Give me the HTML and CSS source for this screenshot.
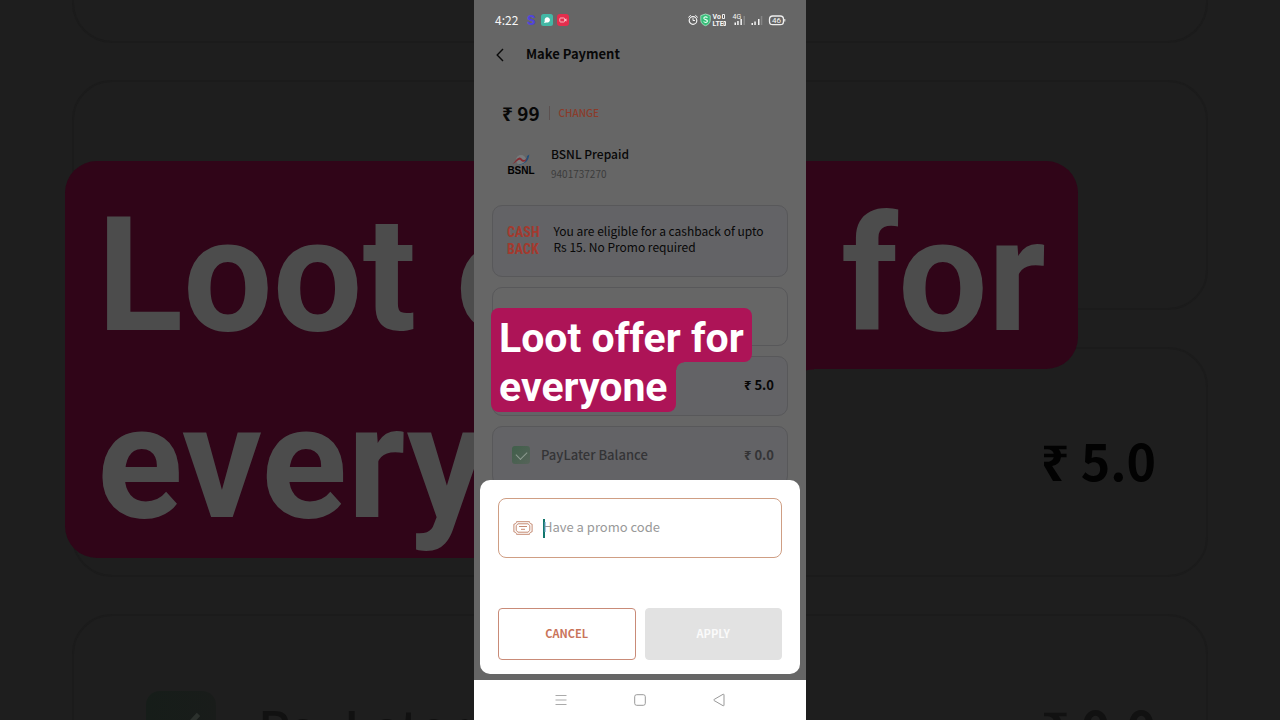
FILE: index.html
```html
<!DOCTYPE html>
<html lang="en">
<head>
<meta charset="utf-8">
<meta name="viewport" content="width=device-width, initial-scale=1">
<title>Make Payment</title>
<link rel="stylesheet" href="styles.css">
</head>
<body>
<div class="stage">
  <div class="backdrop" aria-hidden="true">
    <div class="backdrop-card backdrop-card-first"></div>
    <div class="backdrop-card"></div>
    <div class="backdrop-card"><span class="backdrop-price">₹ 5.0</span></div>
    <div class="backdrop-card backdrop-muted">
      <span class="backdrop-check"><svg viewBox="0 0 18 18"><path d="M4.500 9.500l3 3 6-6.500" fill="none" stroke="#2c312d" stroke-width="1.200"/></svg></span>
      <span class="backdrop-label">PayLater Balance</span>
      <span class="backdrop-price">₹ 0.0</span>
    </div>
    <p class="banner banner-large"><span class="banner-line">Loot offer for</span><span class="banner-line">everyone</span></p>
  </div>

  <div class="phone">
    <div class="app">
      <div class="status">
        <span class="clock">4:22</span>
        <span class="notices">
          <span class="notice-s">S</span>
          <svg width="12" height="12" viewBox="0 0 12 12"><rect width="12" height="12" rx="2.500" fill="#43b8a5"/><path d="M3 9l.8-2A2.700 2.700 0 1 1 5.500 8.500z" fill="#fff"/></svg>
          <svg width="12" height="12" viewBox="0 0 12 12"><rect width="12" height="12" rx="3" fill="#e42e4d"/><rect x="2.800" y="4" width="4.800" height="4" rx=".8" fill="none" stroke="#ffc4cd" stroke-width=".9"/><path d="M8 5.200l1.500-.8v3.200L8 6.800" fill="#ffc4cd"/></svg>
        </span>
        <svg class="signals" width="98" height="14" viewBox="0 0 98 14" role="img" aria-label="Alarm, security, VoLTE, signal, battery 46 percent">
          <g fill="none" stroke="#f4f4f4" stroke-linecap="round">
            <circle cx="5" cy="7.500" r="3.800" stroke-width="1.200"/>
            <path d="M5 5.500v2h1.600M.6 4.200l1.900-1.700M9.500 4.200L7.600 2.500" stroke-width="1"/>
          </g>
          <path d="M17.500 1l4.700 1.600v4.800c0 2.500-2 4.300-4.700 5.300-2.700-1-4.700-2.800-4.700-5.300V2.600z" fill="#35bd78" stroke="#aee8c9" stroke-width=".8"/>
          <path d="M19.500 4.600c-1-1.200-3.700-1-3.700.7s3.700 1 3.700 2.700-2.800 1.900-3.900.5" fill="none" stroke="#e8fff2" stroke-width="1.100"/>
          <text class="signal-volte" x="24.500" y="6">Vo</text>
          <text class="signal-volte" x="24.500" y="13">LTE</text>
          <path d="M34.500 1.500h2v4h-2zM36 8.500h1.500v4H36z" fill="#555" stroke="#fff" stroke-width=".9"/>
          <text class="signal-type" x="44.500" y="6">4G</text>
          <g fill="#f5f5f5"><rect x="46.500" y="9.500" width="1.500" height="2.500"/><rect x="49.200" y="8" width="1.500" height="4"/><rect x="52.400" y="6" width="1.500" height="6"/></g>
          <rect x="55.500" y="3" width="1.500" height="9" fill="#858585"/>
          <g fill="#f5f5f5"><rect x="63.500" y="10" width="1.500" height="2"/><rect x="66.300" y="8.500" width="1.500" height="3.500"/><rect x="70" y="6" width="1.500" height="6"/></g>
          <rect x="72.800" y="3" width="1.500" height="9" fill="#858585"/>
          <rect x="81.500" y="3" width="14" height="8.600" rx="3.200" fill="none" stroke="#eee" stroke-width="1.300"/>
          <path d="M96.800 6v2.500" stroke="#eee"/>
          <text class="signal-battery" x="88.500" y="10" text-anchor="middle">46</text>
        </svg>
      </div>

      <header class="topbar">
        <button class="back" type="button" aria-label="Back"><svg width="8" height="14" viewBox="0 0 8 14"><path d="M7 1L1.200 7 7 13" fill="none" stroke="#0b0b0b" stroke-width="1.400"/></svg></button>
        <h1 class="title">Make Payment</h1>
      </header>

      <main class="content">
        <div class="amount">
          <strong class="amount-value">₹ 99</strong>
          <a class="change" href="#">CHANGE</a>
        </div>
        <div class="operator">
          <svg class="operator-logo" width="28" height="24" viewBox="0 0 28 24" role="img" aria-label="BSNL">
            <circle cx="14" cy="8" r="5" fill="#777a7c"/>
            <path d="M5 12c2.500-1 4.500-6 7.500-6.500 2-.3 2.500 2.500 4.500 2.500 1.500 0 2.500-1.500 3.500-3-.5 3-2 4.800-4 4.800-2.500 0-2.500-2-4-2-2 0-3.500 3.500-7.500 4.200z" fill="#852c32"/>
            <path d="M11 12.500c3 .5 6-.5 8-2.500 2-2 3-4.500 3.300-7.500l-2.300 1.500c0 3-1.500 6-4 7.200-1.500.8-3.500 1-5 1.300z" fill="#244f78"/>
            <text class="bsnl-name" x="14" y="22" text-anchor="middle">BSNL</text>
          </svg>
          <div class="operator-info">
            <h2 class="operator-name">BSNL Prepaid</h2>
            <p class="operator-number">9401737270</p>
          </div>
        </div>
        <div class="cards">
          <section class="card card-cashback">
            <span class="cashback-logo"><span>CASH</span><span>BACK</span></span>
            <p class="cashback-text">You are eligible for a cashback of upto Rs 15. No Promo required</p>
          </section>
          <section class="card card-plain"></section>
          <section class="card"><strong class="price">₹ 5.0</strong></section>
          <section class="card card-muted">
            <input class="check" type="checkbox" id="paylater" checked>
            <label class="check-label" for="paylater">PayLater Balance</label>
            <span class="price">₹ 0.0</span>
          </section>
        </div>
      </main>

      <p class="banner banner-small"><span class="banner-line">Loot offer for</span><span class="banner-line">everyone</span></p>

      <form class="sheet">
        <div class="field">
          <svg width="20" height="14" viewBox="0 0 20 14"><g fill="none" stroke="#c58a72" stroke-width="1"><path d="M3.500 .7h13c0 1.500 1 2.300 2.600 2.500v7.600c-1.600.2-2.600 1-2.600 2.500h-13c0-1.500-1-2.300-2.600-2.500V3.200C2.500 3 3.500 2.200 3.500.7z"/><path d="M5 2.800h10l1.800 1.700v5L15 11.200H5L3.200 9.500v-5z"/><path d="M6 5.500h8M8 8.300h4"/></g></svg>
          <span class="caret"></span>
          <input class="promo" type="text" placeholder="Have a promo code" aria-label="Promo code">
        </div>
        <div class="actions">
          <button class="action action-cancel" type="button">CANCEL</button>
          <button class="action action-apply" type="submit" disabled>APPLY</button>
        </div>
      </form>
    </div>

    <nav class="system-nav">
      <button class="nav-button" type="button" aria-label="Recent apps"><svg width="12" height="12" viewBox="0 0 12 12"><path d="M.5 1.500h11M.5 6h11M.5 10.500h11" stroke="#aaa" fill="none"/></svg></button>
      <button class="nav-button" type="button" aria-label="Home"><svg width="12" height="12" viewBox="0 0 12 12"><rect x=".7" y=".7" width="10.600" height="10.600" rx="2" stroke="#999" fill="none"/></svg></button>
      <button class="nav-button" type="button" aria-label="Back"><svg width="12" height="14" viewBox="0 0 12 14"><path d="M11 1.800v10.400c0 .6-.5.800-1 .5L1.200 7.600c-.5-.3-.5-.9 0-1.200L10 1.300c.5-.3 1-.1 1 .5z" stroke="#999" fill="none"/></svg></button>
    </nav>
  </div>
</div>
</body>
</html>
```
FILE: styles.css
```css
* { box-sizing: border-box; }

body {
  margin: 0;
  background: #1e1e1e;
  color: #080808;
  font-family: "Noto Sans CJK SC", "Noto Sans", sans-serif;
}

h1, h2, p { margin: 0; }

button, input { font-family: inherit; }

.stage {
  position: relative;
  display: flex;
  justify-content: center;
  height: 100vh;
  overflow: hidden;
}

/* Enlarged, dimmed copy of the app behind the phone */
.backdrop {
  position: absolute;
  inset: 0;
  display: flex;
  flex-direction: column;
  gap: 37px;
  padding: 0 72px;
  overflow: hidden;
}

.backdrop-card {
  display: flex;
  flex: none;
  align-items: center;
  height: 230px;
  padding: 0 50px 6px 72px;
  border: 2px solid #1b1b1b;
  border-radius: 40px;
}

.backdrop-card-first {
  height: 43px;
  border-top: 0;
  border-radius: 0 0 40px 40px;
}

.backdrop-price {
  margin-left: auto;
  color: #020202;
  font-size: 50px;
  font-weight: 700;
}

.backdrop-muted, .backdrop-muted .backdrop-price { color: #111; }

.backdrop-check {
  width: 70px;
  height: 70px;
  border-radius: 14px;
  background: linear-gradient(90deg, #161d19, #191c1a);
}

.backdrop-label {
  margin-left: 42px;
  font-size: 50px;
  font-weight: 500;
}

/* Two-line caption on stepped boxes */
.banner {
  position: absolute;
  font-family: Roboto, sans-serif;
  font-weight: 700;
  white-space: nowrap;
}

.banner-line {
  position: relative;
  display: block;
  width: fit-content;
  background: var(--banner-fill);
  padding: 0 var(--banner-pad);
  border-radius: var(--banner-radius);
}

.banner-line:first-child { border-bottom-left-radius: 0; }

.banner-line:last-child {
  border-top-left-radius: 0;
  border-top-right-radius: 0;
}

.banner-line:last-child::after {
  content: "";
  position: absolute;
  top: 0;
  left: 100%;
  width: var(--banner-radius);
  height: var(--banner-radius);
  background: radial-gradient(circle at 100% 100%, transparent calc(var(--banner-radius) - 1px), var(--banner-fill) var(--banner-radius));
}

.banner-large {
  --banner-fill: #300518;
  --banner-pad: 32px;
  --banner-radius: 32px;
  top: 161px;
  left: 65px;
  color: #4c4c4c;
  font-size: 159px;
}

.banner-large .banner-line:first-child { height: 208px; line-height: 230px; }
.banner-large .banner-line:last-child { height: 189px; line-height: 188px; }

.banner-small {
  --banner-fill: #ad1457;
  --banner-pad: 8px;
  --banner-radius: 8px;
  top: 308px;
  left: 17px;
  color: #fff;
  font-size: 41px;
}

.banner-small .banner-line:first-child { height: 54px; line-height: 60px; }
.banner-small .banner-line:last-child { height: 50px; line-height: 50px; }

.phone {
  position: relative;
  display: flex;
  flex-direction: column;
  width: 100%;
  max-width: 332px;
  background: #666;
}

.app {
  position: relative;
  display: flex;
  flex: 1;
  flex-direction: column;
  min-height: 0;
  overflow: hidden;
}

.status {
  display: flex;
  flex: none;
  align-items: center;
  height: 40px;
  padding: 0 20px 0 21px;
  color: #f6f6f6;
}

.clock {
  font-size: 12px;
  line-height: 16px;
}

.notices {
  display: flex;
  align-items: center;
  gap: 4px;
  margin-left: 7px;
}

.notice-s {
  width: 12px;
  color: #5145d8;
  font-family: Inter, sans-serif;
  font-size: 13px;
  font-weight: 800;
  line-height: 16px;
  text-align: center;
}

.signals { margin-left: auto; }

.signal-volte, .signal-type, .signal-battery {
  fill: #f5f5f5;
  font-family: Roboto, sans-serif;
}

.signal-volte { font-size: 7px; font-weight: 700; }
.signal-type { font-size: 7px; }
.signal-battery { font-size: 8px; }

.topbar {
  display: flex;
  flex: none;
  align-items: center;
  gap: 22px;
  height: 30px;
  padding: 0 22px;
}

.back {
  display: flex;
  padding: 0;
  border: 0;
  background: none;
}

.title {
  padding-bottom: 2px;
  font-size: 13px;
  font-weight: 700;
  line-height: 20px;
}

.content {
  display: flex;
  flex-direction: column;
  padding: 28px 18px 0;
}

.amount {
  display: flex;
  align-items: center;
  gap: 9px;
  padding-left: 10px;
}

.amount-value {
  font-size: 19px;
  line-height: 30px;
}

.change {
  padding-left: 9px;
  border-left: 1px solid #5c5150;
  color: #8b3b2a;
  font-size: 10px;
  font-weight: 500;
  line-height: 14px;
  text-decoration: none;
}

.operator {
  display: flex;
  align-items: center;
  gap: 16px;
  padding: 16px 0 21px 15px;
}

.operator-name {
  font-size: 12px;
  font-weight: 500;
  line-height: 20px;
}

.operator-number {
  color: #3c3c3c;
  font-size: 10px;
  line-height: 20px;
}

.bsnl-name {
  font-family: "Liberation Sans", sans-serif;
  font-size: 10px;
  font-weight: 700;
}

.cards {
  display: flex;
  flex-direction: column;
  gap: 10px;
}

.card {
  display: flex;
  flex: none;
  align-items: center;
  height: 60px;
  padding: 0 13px 3px 19px;
  border: 1px solid #58585a;
  border-radius: 10px;
  background: #636366;
}

.card-cashback {
  gap: 14px;
  height: 72px;
  padding: 0 14px;
}

.card-plain {
  height: 59px;
  background: #666;
}

.cashback-logo {
  display: flex;
  flex-direction: column;
  color: #a33a2e;
  font-family: "Roboto Condensed", Roboto, sans-serif;
  font-size: 14px;
  font-weight: 700;
  line-height: 17px;
}

.cashback-text {
  padding-bottom: 5px;
  font-size: 12px;
  line-height: 16px;
}

.price {
  margin-left: auto;
  font-size: 13px;
  font-weight: 700;
}

.card-muted .price, .check-label { color: #343436; }

.check {
  position: relative;
  width: 18px;
  height: 18px;
  margin: 0;
  border-radius: 3px;
  background: linear-gradient(135deg, #405f4a, #566359);
  appearance: none;
}

.check::after {
  content: "";
  position: absolute;
  top: 3px;
  left: 6px;
  width: 6px;
  height: 9px;
  border: solid #8c9a90;
  border-width: 0 1px 1px 0;
  transform: rotate(45deg);
}

.check-label {
  margin-left: 11px;
  font-size: 13px;
  font-weight: 500;
}

.sheet {
  position: absolute;
  right: 6px;
  bottom: 6px;
  left: 6px;
  display: flex;
  flex-direction: column;
  gap: 50px;
  padding: 18px 18px 14px;
  border-radius: 10px;
  background: #fff;
}

.field {
  display: flex;
  align-items: center;
  height: 60px;
  padding: 0 15px 0 14px;
  border: 1px solid #cf9e84;
  border-radius: 8px;
}

.field svg { flex: none; }

.caret {
  flex: none;
  width: 2px;
  height: 19px;
  margin: 0 -2px 0 10px;
  background: #11766c;
}

.promo {
  flex: 1;
  min-width: 0;
  padding: 0 0 2px;
  border: 0;
  outline: 0;
  background: none;
  color: #222;
  font-size: 13px;
  line-height: 20px;
}

.promo::placeholder { color: #999; opacity: 1; }

.actions {
  display: flex;
  gap: 9px;
}

.action {
  flex: 1;
  height: 52px;
  padding: 0 0 3px;
  border: 1px solid #c98b78;
  border-radius: 4px;
  background: #fff;
  color: #c9745a;
  font-size: 11px;
  font-weight: 700;
}

.action-apply {
  border-color: #e2e2e2;
  background: #e2e2e2;
  color: #fafafa;
}

.system-nav {
  display: flex;
  flex: none;
  align-items: center;
  justify-content: center;
  gap: 67px;
  height: 40px;
  background: #fff;
}

.nav-button {
  display: flex;
  padding: 0;
  border: 0;
  background: none;
}
```
